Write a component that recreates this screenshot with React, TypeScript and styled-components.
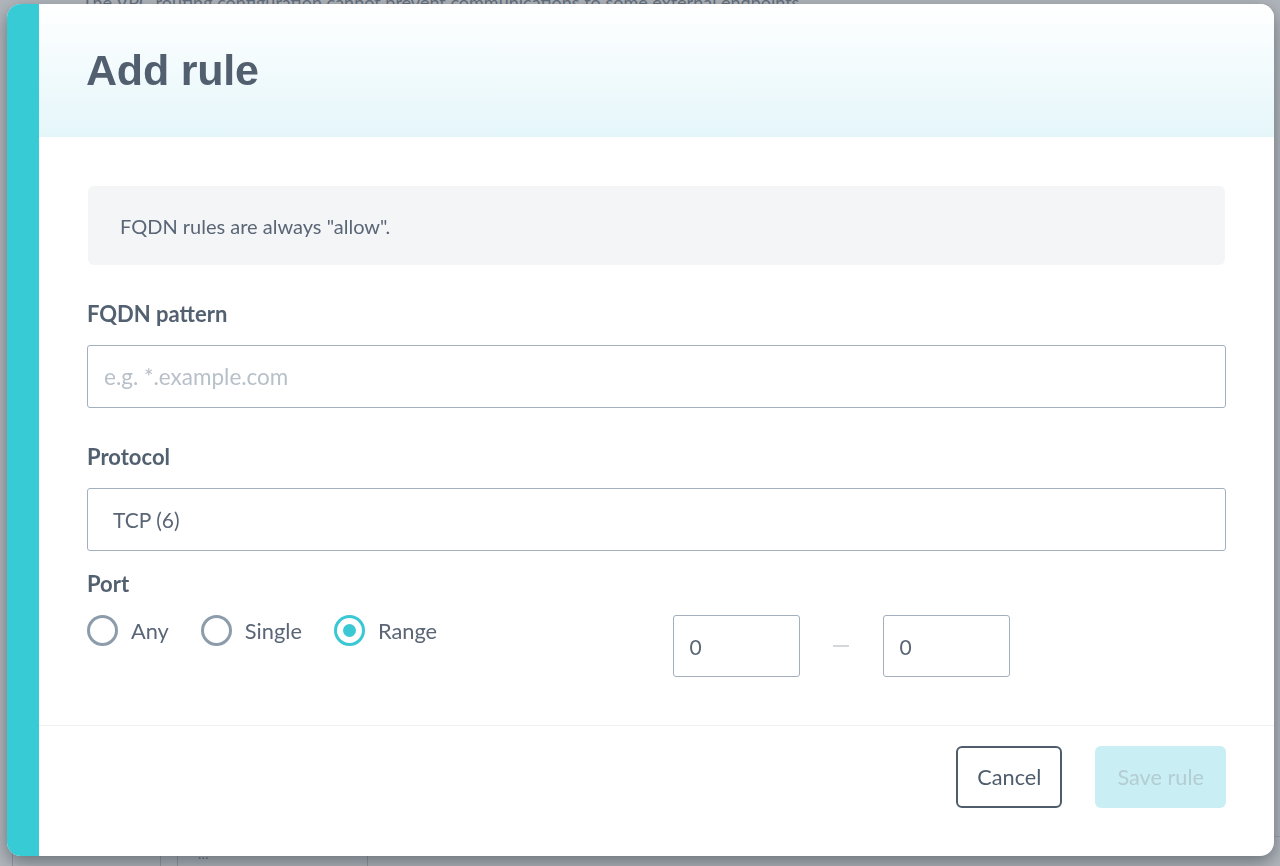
import React from "react";
import styled, { createGlobalStyle } from "styled-components";

const GlobalStyle = createGlobalStyle`
  * { box-sizing: border-box; }
  html, body { margin: 0; padding: 0; height: 100%; }
  body {
    font-family: Lato, "Open Sans", "Liberation Sans", sans-serif;
    background: #ffffff;
    overflow: hidden;
  }
`;

const Page = styled.div`
  height: 866px;
  display: flex;
  flex-direction: column;
  justify-content: space-between;
  color: #6b7785;
`;

const PageTopText = styled.p`
  margin: -9px 0 0 82px;
  font-size: 18px;
  line-height: 22px;
  color: #7c8793;
`;

const PageTable = styled.div`
  display: grid;
  grid-template-columns: 148px 17px 190px 1fr;
  height: 30px;
  margin-left: 12px;
  border-top: 1px solid #d9dde2;
`;

const PageCell = styled.div`
  border-left: 1px solid #c9ced4;
  font-size: 14px;
  padding: 8px 0 0 20px;
  color: #8a949f;
`;

const Overlay = styled.div`
  position: fixed;
  inset: 0;
  background: rgba(70, 82, 96, 0.42);
  padding: 4px 6px 10px 7px;
  display: flex;
`;

const Dialog = styled.div`
  flex: 1;
  display: flex;
  background: #ffffff;
  border-radius: 14px;
  overflow: hidden;
  box-shadow: 0 6px 18px rgba(20, 28, 38, 0.45);
`;

const Stripe = styled.div`
  width: 32px;
  flex: none;
  background: #37cbd6;
`;

const Main = styled.div`
  flex: 1;
  display: flex;
  flex-direction: column;
  min-width: 0;
`;

const Header = styled.header`
  height: 133px;
  flex: none;
  display: flex;
  align-items: center;
  padding: 0 48px;
  background: linear-gradient(180deg, #ffffff 0%, #f3fbfd 45%, #e5f6fa 100%);
`;

const Title = styled.h1`
  margin: 0 0 0 -1px;
  font-family: "Liberation Sans", Arial, sans-serif;
  font-weight: 700;
  font-size: 43px;
  letter-spacing: -0.2px;
  color: #525f6f;
`;

const Body = styled.div`
  flex: 1;
  padding: 49px 48px 48px 48px;
  display: flex;
  flex-direction: column;
`;

const Notice = styled.div`
  height: 79px;
  margin: 0 1px;
  border-radius: 6px;
  background: #f4f5f6;
  display: flex;
  align-items: center;
  padding: 0 32px;
  font-size: 20px;
  color: #5a6676;
`;

const Label = styled.label<{ $top: number }>`
  display: block;
  margin-top: ${(p) => p.$top}px;
  font-size: 22px;
  line-height: 28px;
  font-weight: 700;
  color: #526070;
`;

const TextBox = styled.div<{ $padLeft: number; $placeholder?: boolean }>`
  margin-top: 17px;
  height: 63px;
  border: 1.5px solid #a3afbc;
  border-radius: 3px;
  display: flex;
  align-items: center;
  padding-left: ${(p) => p.$padLeft}px;
  font-size: ${(p) => (p.$placeholder ? 22.5 : 21)}px;
  color: ${(p) => (p.$placeholder ? "#b8c0c9" : "#5a6676")};
`;

const PortGrid = styled.div`
  margin-top: 17px;
  display: grid;
  grid-template-columns: 1fr 1fr;
  column-gap: 32px;
  align-items: start;
`;

const RadioGroup = styled.div`
  display: flex;
  gap: 32px;
`;

const RadioItem = styled.div`
  display: flex;
  align-items: center;
  gap: 13px;
  font-size: 21.8px;
  color: #5a6676;
  height: 31px;
`;

const RadioCircle = styled.span<{ $checked?: boolean }>`
  width: 31px;
  height: 31px;
  border-radius: 50%;
  border: 3px solid ${(p) => (p.$checked ? "#3ac8d4" : "#8d9cab")};
  display: flex;
  align-items: center;
  justify-content: center;
  &::after {
    content: "";
    width: 13px;
    height: 13px;
    border-radius: 50%;
    background: #3ac8d4;
    display: ${(p) => (p.$checked ? "block" : "none")};
  }
`;

const RangeRow = styled.div`
  display: flex;
  align-items: center;
`;

const SmallBox = styled.div`
  width: 127px;
  height: 62px;
  border: 1.5px solid #a3afbc;
  border-radius: 3px;
  display: flex;
  align-items: center;
  padding-left: 16px;
  font-size: 21px;
  color: #5a6676;
`;

const Dash = styled.span`
  width: 83px;
  display: flex;
  justify-content: center;
  &::before {
    content: "";
    width: 16px;
    height: 1.5px;
    background: #d3d8dd;
  }
`;

const Footer = styled.footer`
  flex: none;
  height: 131px;
  border-top: 1px solid #eef0f2;
  padding: 20px 48px 0 48px;
  display: flex;
  justify-content: flex-end;
  gap: 33px;
`;

const Button = styled.button<{ $primary?: boolean }>`
  height: 62px;
  padding: 0 ${(p) => (p.$primary ? 22 : 19)}px;
  border-radius: 6px;
  font-family: Lato, "Open Sans", sans-serif;
  font-size: 21.7px;
  cursor: pointer;
  border: ${(p) => (p.$primary ? "none" : "2.5px solid #4e5c6c")};
  background: ${(p) => (p.$primary ? "#c9eef3" : "#ffffff")};
  color: ${(p) => (p.$primary ? "#b3cdd3" : "#4e5c6c")};
`;

export default function App() {
  return (
    <>
      <GlobalStyle />
      <Page>
        <PageTopText>
          The VPC routing configuration cannot prevent communications to some external endpoints.
        </PageTopText>
        <PageTable>
          <PageCell />
          <PageCell />
          <PageCell>…</PageCell>
          <PageCell />
        </PageTable>
      </Page>
      <Overlay>
        <Dialog role="dialog" aria-labelledby="add-rule-title">
          <Stripe />
          <Main>
            <Header>
              <Title id="add-rule-title">Add rule</Title>
            </Header>
            <Body>
              <Notice>FQDN rules are always "allow".</Notice>
              <Label $top={35}>FQDN pattern</Label>
              <TextBox $padLeft={16} $placeholder>
                e.g. *.example.com
              </TextBox>
              <Label $top={35}>Protocol</Label>
              <TextBox $padLeft={25}>TCP (6)</TextBox>
              <Label $top={19}>Port</Label>
              <PortGrid>
                <RadioGroup>
                  <RadioItem>
                    <RadioCircle />
                    Any
                  </RadioItem>
                  <RadioItem>
                    <RadioCircle />
                    Single
                  </RadioItem>
                  <RadioItem>
                    <RadioCircle $checked />
                    Range
                  </RadioItem>
                </RadioGroup>
                <RangeRow>
                  <SmallBox>0</SmallBox>
                  <Dash />
                  <SmallBox>0</SmallBox>
                </RangeRow>
              </PortGrid>
            </Body>
            <Footer>
              <Button>Cancel</Button>
              <Button $primary disabled>
                Save rule
              </Button>
            </Footer>
          </Main>
        </Dialog>
      </Overlay>
    </>
  );
}
